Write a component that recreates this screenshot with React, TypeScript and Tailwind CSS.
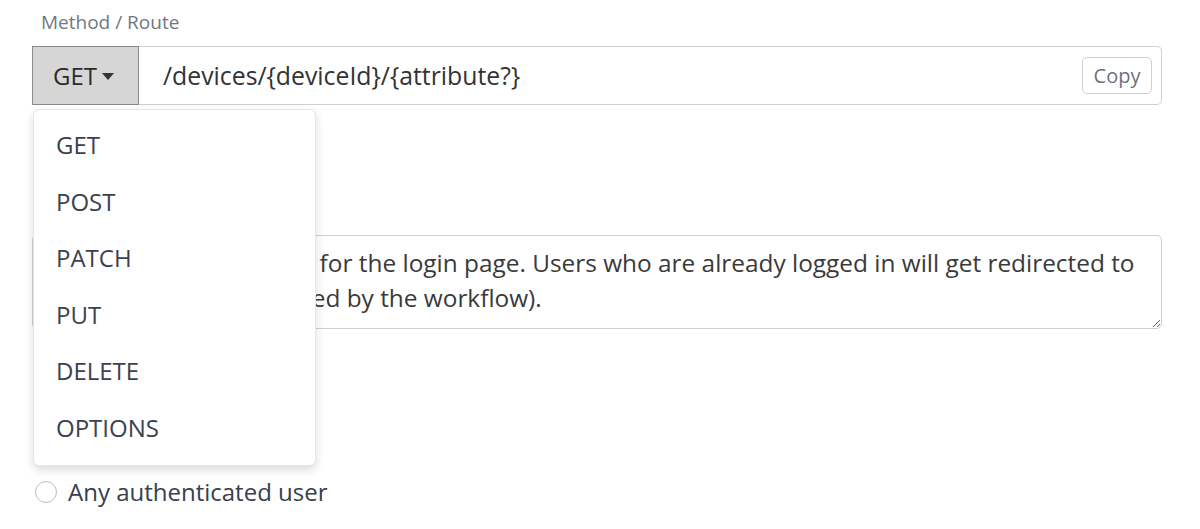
const METHODS = ["GET", "POST", "PATCH", "PUT", "DELETE", "OPTIONS"];

export default function App() {
  return (
    <div className="w-[1200px] h-[529px] overflow-hidden bg-white pl-8 pr-[38px] pt-3 font-['Open_Sans','Noto_Sans',sans-serif]">
      <div className="pl-[9px] text-[19px] leading-[20px] text-[#717784]">Method / Route</div>

      <div className="relative mt-[14px] flex h-[59px]">
        <button className="flex w-[107px] items-center justify-center gap-[5px] border border-[#8a8a8a] bg-[#d6d6d6] pr-[4px] text-[24px] text-[#2b2b2b]">
          GET
          <svg width="12" height="7" viewBox="0 0 12 7" className="mt-[2px]">
            <path d="M0 0h12L6 7z" fill="#333" />
          </svg>
        </button>
        <div className="flex flex-1 items-center rounded-r-[5px] border border-l-0 border-[#cfcfcf] pl-6 pr-[9px]">
          <span className="flex-1 text-[24.8px] text-[#333]">/devices/{"{deviceId}"}/{"{attribute?}"}</span>
          <button className="h-[37px] w-[70px] rounded-[5px] border border-[#cfcfcf] text-[20px] text-[#6b7280]">
            Copy
          </button>
        </div>

        <ul className="absolute left-[1px] top-[63px] z-10 w-[283px] rounded-[6px] border border-[#e6e6e6] bg-white py-[8px] shadow-[0_4px_10px_rgba(0,0,0,0.14)]">
          {METHODS.map((m) => (
            <li key={m} className="flex h-[56.5px] items-center pb-[2px] pl-[22px] text-[24px] text-[#3a4250]">
              {m}
            </li>
          ))}
        </ul>
      </div>

      <textarea
        readOnly
        wrap="off"
        className="mt-[130px] block h-[94px] w-full overflow-hidden rounded-[5px] border border-[#cfcfcf] px-6 pt-[9px] text-[24.4px] leading-[35px] text-[#3a3a3a] outline-none"
        value={
          "Sets the custom route  for the login page. Users who are already logged in will get redirected to\nthe home page (as noted by the workflow)."
        }
      />

      <label className="mt-[147px] flex items-center gap-[11px] pl-[3px] text-[24px] leading-[32px] text-[#36404e]">
        <span className="h-[22px] w-[22px] rounded-full border border-[#bdbdbd] bg-white" />
        Any authenticated user
      </label>
    </div>
  );
}
